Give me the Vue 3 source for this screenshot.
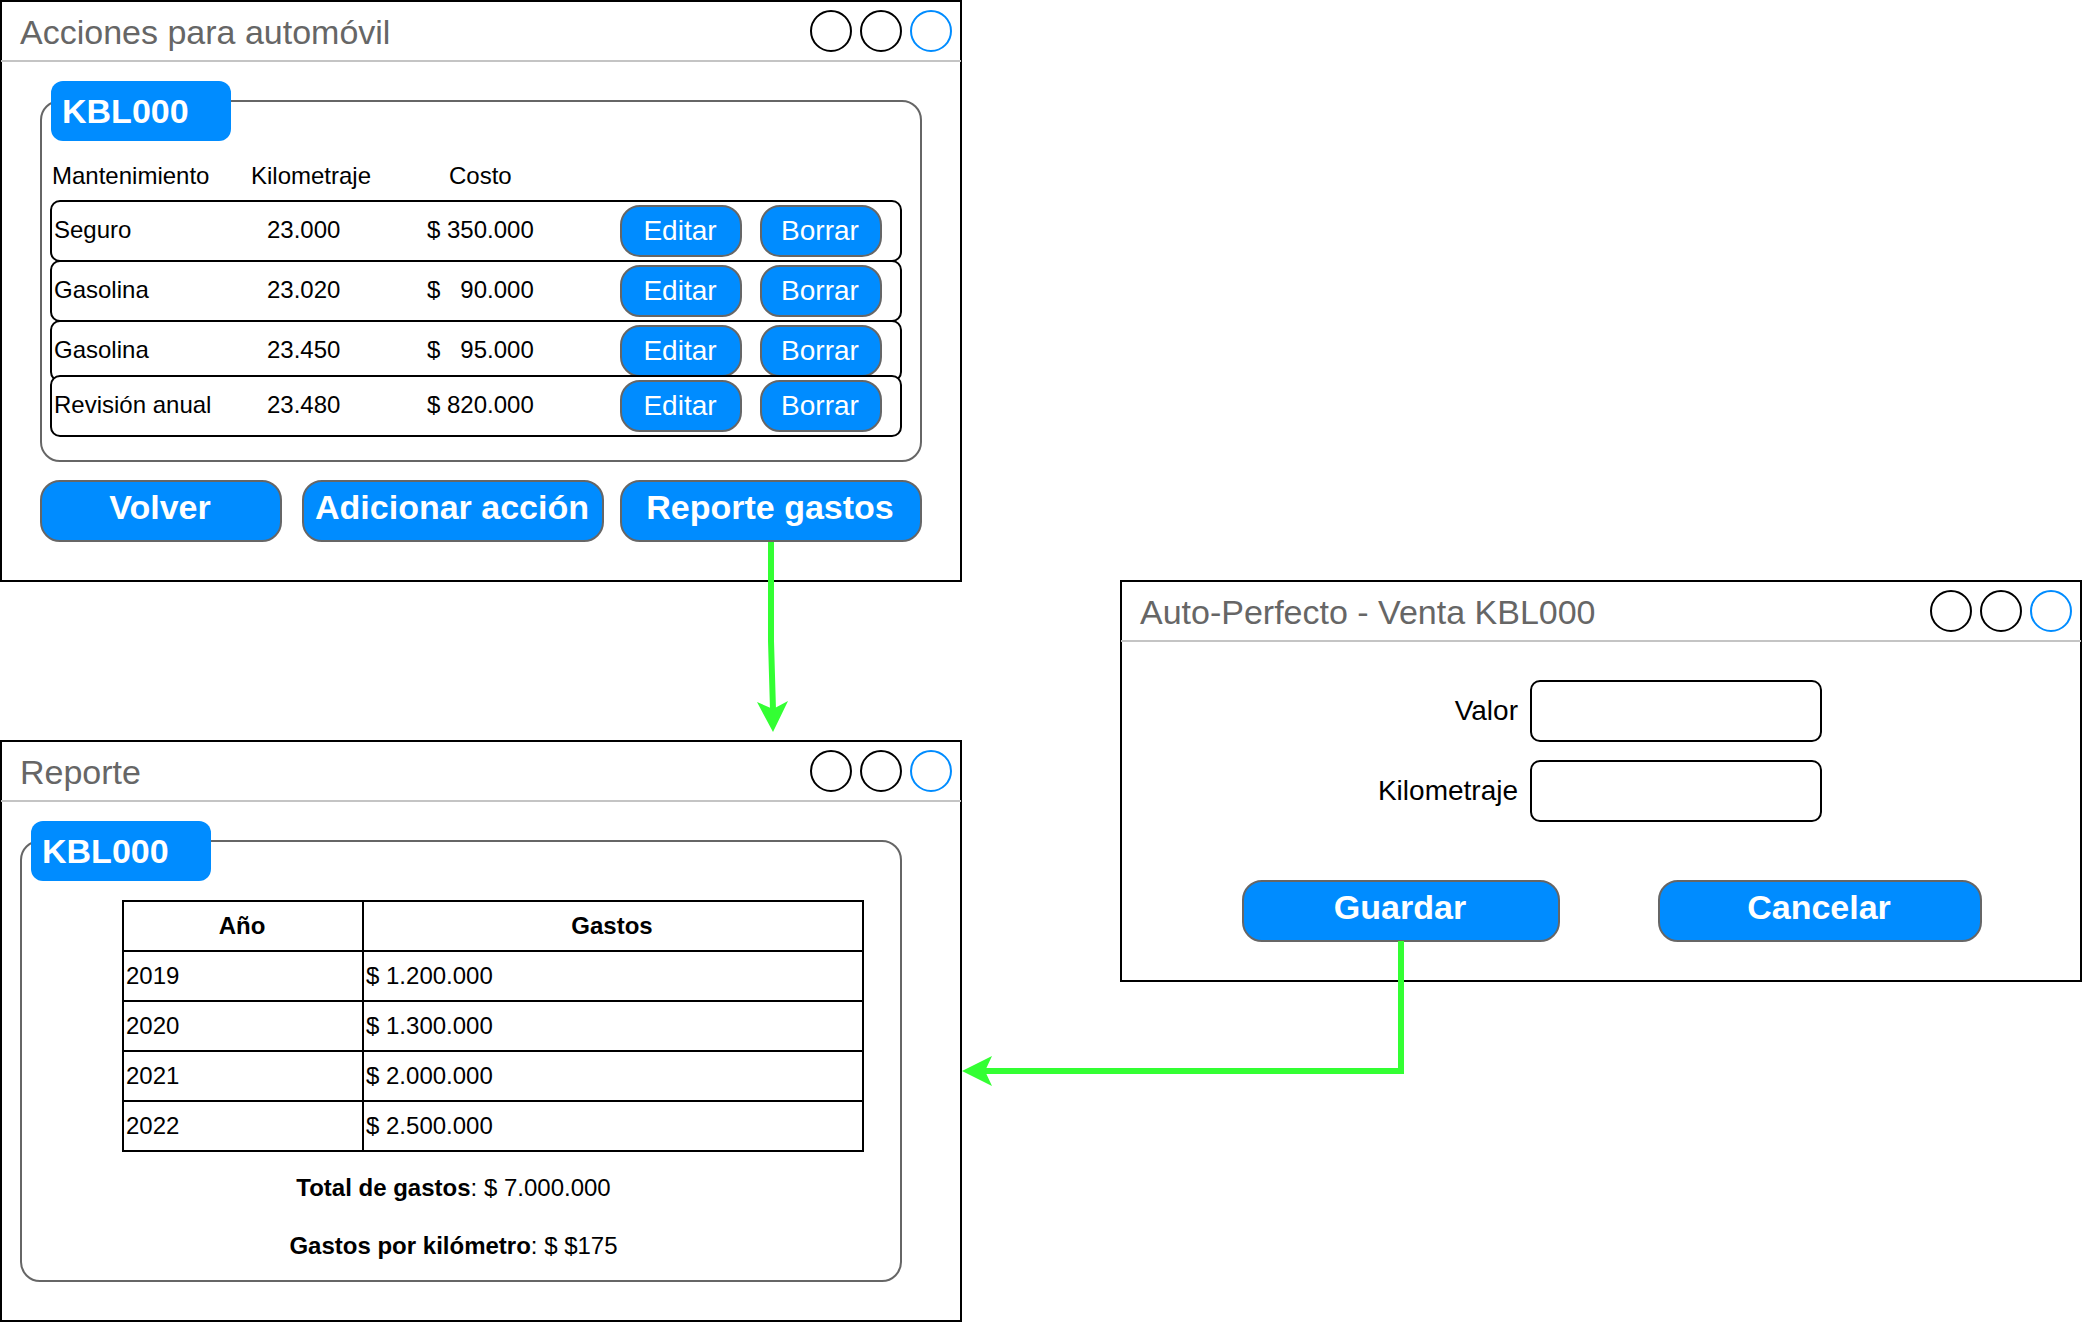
<script setup>
import { onBeforeUnmount, onMounted, ref } from 'vue'

const nbsp = '\u00a0'

const actions = [
  { name: 'Seguro', km: '23.000', cost: '$ 350.000' },
  { name: 'Gasolina', km: '23.020', cost: `$${nbsp.repeat(3)}90.000` },
  { name: 'Gasolina', km: '23.450', cost: `$${nbsp.repeat(3)}95.000` },
  { name: 'Revisión anual', km: '23.480', cost: '$ 820.000' }
]

const expenses = [
  { year: '2019', amount: '$ 1.200.000' },
  { year: '2020', amount: '$ 1.300.000' },
  { year: '2021', amount: '$ 2.000.000' },
  { year: '2022', amount: '$ 2.500.000' }
]

const board = ref(null)
const reportButton = ref(null)
const reportWindow = ref(null)
const saveButton = ref(null)
const arrows = ref([])

// Connectors run from a button to the report window, wherever those are laid out.
function layoutArrows() {
  const origin = board.value.getBoundingClientRect()
  const box = (el) => {
    const r = el.getBoundingClientRect()
    return {
      top: Math.round(r.top - origin.top),
      right: Math.round(r.right - origin.left),
      bottom: Math.round(r.bottom - origin.top),
      middle: Math.round((r.left + r.right) / 2 - origin.left)
    }
  }
  const report = box(reportWindow.value)
  const open = box(reportButton.value)
  const save = box(saveButton.value)

  const x = open.middle
  const tipY = report.top - 8
  const bendY = Math.round((open.bottom + report.top) / 2)
  const lineY = save.bottom + 129

  arrows.value = [
    {
      line: `M${x} ${open.bottom}V${bendY}L${x + 2} ${tipY - 22}`,
      head: `M${x + 2} ${tipY}l-16 -30l16 7l15 -8z`
    },
    {
      line: `M${save.middle} ${save.bottom - 1}V${lineY}H${report.right + 22}`,
      head: `M${report.right} ${lineY}l30 -15l-7 15l7 15z`
    }
  ]
}

onMounted(() => {
  layoutArrows()
  window.addEventListener('resize', layoutArrows)
})
onBeforeUnmount(() => window.removeEventListener('resize', layoutArrows))
</script>

<template>
  <main ref="board" class="board">
    <div class="column">
      <section class="window">
        <header class="titlebar">
          <h2>Acciones para automóvil</h2>
          <span class="dots"><i></i><i></i><i class="active"></i></span>
        </header>
        <div class="body actions">
          <div class="panel action-panel">
            <span class="tag">KBL000</span>
            <table class="action-table">
              <thead>
                <tr>
                  <th>Mantenimiento</th>
                  <th>Kilometraje</th>
                  <th>Costo</th>
                </tr>
              </thead>
              <tbody>
                <tr v-for="(a, i) in actions" :key="i">
                  <td>{{ a.name }}</td>
                  <td>{{ a.km }}</td>
                  <td>{{ a.cost }}</td>
                  <td class="row-buttons">
                    <button type="button" class="btn small">Editar</button>
                    <button type="button" class="btn small">Borrar</button>
                  </td>
                </tr>
              </tbody>
            </table>
          </div>
          <div class="footer-buttons">
            <button type="button" class="btn back">Volver</button>
            <button type="button" class="btn">Adicionar acción</button>
            <button ref="reportButton" type="button" class="btn">Reporte gastos</button>
          </div>
        </div>
      </section>

      <section ref="reportWindow" class="window">
        <header class="titlebar">
          <h2>Reporte</h2>
          <span class="dots"><i></i><i></i><i class="active"></i></span>
        </header>
        <div class="body report">
          <div class="panel report-panel">
            <span class="tag">KBL000</span>
            <table class="expense-table">
              <thead>
                <tr>
                  <th class="year">Año</th>
                  <th>Gastos</th>
                </tr>
              </thead>
              <tbody>
                <tr v-for="e in expenses" :key="e.year">
                  <td>{{ e.year }}</td>
                  <td>{{ e.amount }}</td>
                </tr>
              </tbody>
            </table>
            <div class="totals">
              <p><b>Total de gastos</b>: $ 7.000.000</p>
              <p><b>Gastos por kilómetro</b>: $ $175</p>
            </div>
          </div>
        </div>
      </section>
    </div>

    <div class="column sale-column">
      <section class="window">
        <header class="titlebar">
          <h2>Auto-Perfecto - Venta KBL000</h2>
          <span class="dots"><i></i><i></i><i class="active"></i></span>
        </header>
        <form class="body sale" @submit.prevent>
          <div class="fields">
            <div class="field">
              <label for="valor">Valor</label>
              <input id="valor" type="text" />
            </div>
            <div class="field">
              <label for="kilometraje">Kilometraje</label>
              <input id="kilometraje" type="text" />
            </div>
          </div>
          <div class="sale-buttons">
            <button ref="saveButton" type="submit" class="btn">Guardar</button>
            <button type="button" class="btn">Cancelar</button>
          </div>
        </form>
      </section>
    </div>

    <svg class="arrows" aria-hidden="true">
      <g v-for="(a, i) in arrows" :key="i">
        <path class="arrow-line" :d="a.line" />
        <path class="arrow-head" :d="a.head" />
      </g>
    </svg>
  </main>
</template>

<style>
body {
  margin: 0;
  background: #fff;
}
</style>

<style scoped>
.board {
  position: relative;
  display: grid;
  grid-template-columns: 1fr 1fr;
  column-gap: 158px;
  font-family: "Liberation Sans", Arial, Helvetica, sans-serif;
  font-size: 24px;
  color: #000;
}
.board * {
  box-sizing: border-box;
}
.column {
  display: flex;
  flex-direction: column;
  gap: 158px;
  min-width: 0;
}
.sale-column {
  padding-top: 580px;
}

.window {
  border: 2px solid #000;
  background: #fff;
}
.titlebar {
  display: flex;
  align-items: center;
  justify-content: space-between;
  height: 60px;
  margin: 0 -1px;
  padding: 0 9px 0 19px;
  border-bottom: 2px solid #c4c4c4;
}
.titlebar h2 {
  margin: 0;
  padding-top: 2px;
  font-size: 34px;
  font-weight: 400;
  line-height: 40px;
  color: #666;
}
.dots {
  display: flex;
  gap: 8px;
}
.dots i {
  width: 42px;
  height: 42px;
  border: 2px solid #000;
  border-radius: 50%;
}
.dots .active {
  border-color: #008cff;
}

.body {
  padding-top: 38px;
  padding-bottom: 38px;
}
.actions {
  padding-left: 38px;
  padding-right: 38px;
}
.report {
  padding-left: 18px;
  padding-right: 58px;
}

.panel {
  position: relative;
  border: 2px solid #666;
  border-radius: 20px;
}
.action-panel {
  padding: 48px 18px 23px 8px;
}
.report-panel {
  padding: 60px 36px 4px 100px;
  padding-top: 58px;
}
.tag {
  position: absolute;
  top: -21px;
  left: 9px;
  width: 180px;
  padding-left: 11px;
  border-radius: 12px;
  background: #008cff;
  color: #fff;
  font-size: 34px;
  font-weight: 700;
  line-height: 60px;
}

.btn {
  height: 62px;
  margin: 0;
  padding: 0 2px 8px 0;
  border: 2px solid #666;
  border-radius: 20px;
  background: #008cff;
  color: #fff;
  font-family: inherit;
  font-size: 34px;
  font-weight: 700;
  line-height: 40px;
  white-space: nowrap;
}
.btn.small {
  flex: 1;
  height: 52px;
  padding: 0 2px 0 0;
  font-size: 28px;
  font-weight: 400;
  line-height: 32px;
}

.action-table,
.action-table thead,
.action-table tbody {
  display: block;
}
.action-table tr {
  display: grid;
  align-items: center;
}
.action-table thead tr {
  height: 50px;
  grid-template-columns: 199fr 198fr 455fr;
}
.action-table th {
  padding: 2px 0 0 2px;
  font-weight: 400;
  text-align: left;
}
.action-table tbody tr {
  position: relative;
  height: 62px;
  grid-template-columns: 215fr 160fr 193fr 280fr;
  border: 2px solid #000;
  border-radius: 10px;
  background: #fff;
}
.action-table tbody tr + tr {
  margin-top: -2px;
}
.action-table tbody tr:last-child {
  margin-top: -7px;
}
.action-table td {
  padding: 0 0 2px;
}
.action-table td:first-child {
  padding-left: 2px;
}
.action-table .row-buttons {
  display: flex;
  gap: 18px;
  padding: 0 18px 0 0;
}

.footer-buttons {
  display: grid;
  grid-template-columns: 246fr 302fr 302fr;
  column-gap: 16px;
  margin-top: 18px;
}
.back {
  margin-right: 4px;
}

.expense-table {
  width: 100%;
  border-collapse: collapse;
  table-layout: fixed;
}
.expense-table th,
.expense-table td {
  height: 50px;
  padding: 0 0 0 2px;
  border: 2px solid #000;
  text-align: left;
}
.expense-table th {
  padding: 0 2px 0 0;
  text-align: center;
}
.expense-table .year {
  width: 240px;
}
.totals {
  padding: 7px 79px 0 0;
  margin-bottom: -1px;
  text-align: center;
}
.totals p {
  margin: 0;
  line-height: 58px;
}
.report-panel {
  padding-bottom: 6px;
}

.fields {
  display: grid;
  row-gap: 18px;
}
.field {
  display: grid;
  grid-template-columns: 408fr 292fr 258fr;
  align-items: center;
}
.field label {
  padding-right: 12px;
  font-size: 28px;
  line-height: 32px;
  text-align: right;
}
.field input {
  width: 100%;
  height: 62px;
  margin: 0;
  padding: 0 12px;
  border: 2px solid #000;
  border-radius: 10px;
  background: #fff;
  font-family: inherit;
  font-size: 28px;
}
.sale-buttons {
  display: grid;
  grid-template-columns: 318fr 324fr;
  column-gap: 98px;
  margin-top: 58px;
  padding: 0 98px 0 120px;
}

.arrows {
  position: absolute;
  inset: 0;
  width: 100%;
  height: 100%;
  pointer-events: none;
}
.arrow-line {
  fill: none;
  stroke: #33ff33;
  stroke-width: 6;
}
.arrow-head {
  fill: #33ff33;
}
</style>
